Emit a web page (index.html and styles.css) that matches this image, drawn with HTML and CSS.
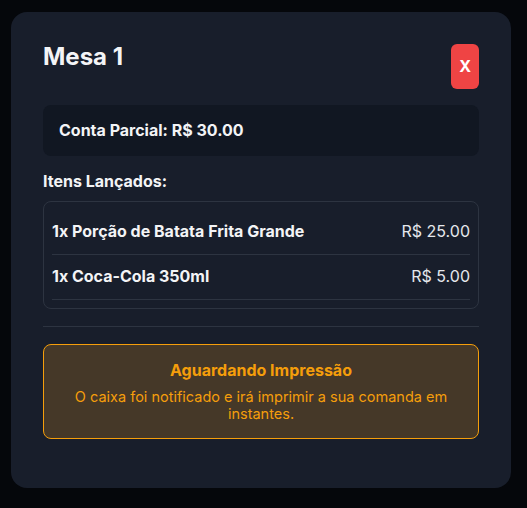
FILE: index.html
```html
<!DOCTYPE html>
<html lang="pt-BR">
<head>
    <meta charset="UTF-8">
    <meta name="viewport" content="width=device-width, initial-scale=1.0">
    <title>Mesa 1</title>
    <link rel="stylesheet" href="styles.css">
</head>
<body>

    <div class="overlay">
        <div class="modal">
            <div class="modal-header">
                <h2>Mesa 1</h2>
                <button class="close">X</button>
            </div>

            <div class="partial">
                <strong>Conta Parcial: R$ 30.00</strong>
            </div>

            <h3>Itens Lançados:</h3>
            <ul class="items">
                <li>
                    <span class="item-name">1x Porção de Batata Frita Grande</span>
                    <span class="item-price">R$ 25.00</span>
                </li>
                <li>
                    <span class="item-name">1x Coca-Cola 350ml</span>
                    <span class="item-price">R$ 5.00</span>
                </li>
            </ul>

            <hr class="divider">

            <!-- Print status -->
            <div class="status">
                <h4>Aguardando Impressão</h4>
                <p>O caixa foi notificado e irá imprimir a sua comanda em instantes.</p>
            </div>
        </div>
    </div>

</body>
</html>
```

FILE: styles.css
```css
* {
    box-sizing: border-box;
}
body {
    margin: 0;
    font-family: Inter, "Noto Sans", Arial, sans-serif;
    background-color: #05070b;
    color: #f3f4f6;
}
.overlay {
    padding: 12px 16px 21px 11px;
}
.modal {
    width: 500px;
    background-color: #181e2b;
    border-radius: 16px;
    padding: 32px 32px 49px 32px;
}
.modal-header {
    display: flex;
    justify-content: space-between;
    align-items: flex-start;
    margin-bottom: 16px;
}
h2 {
    margin: 0;
    font-size: 24px;
    line-height: 26px;
    font-weight: 700;
}
.close {
    background-color: #ef4444;
    color: #fff;
    border: none;
    border-radius: 6px;
    padding: 13px 8px;
    font-family: inherit;
    font-size: 16px;
    line-height: 19px;
    font-weight: 700;
    cursor: pointer;
}
.partial {
    background-color: #111722;
    border-radius: 8px;
    padding: 16px;
    font-size: 16px;
    line-height: 19px;
    margin-bottom: 16px;
}
h3 {
    margin: 0 0 10px 0;
    font-size: 16px;
    line-height: 19px;
    font-weight: 700;
}
.items {
    list-style-type: none;
    margin: 0;
    padding: 8px;
    border: 1px solid #2d3441;
    border-radius: 8px;
}
.items li {
    display: flex;
    justify-content: space-between;
    padding: 12px 0 13px 0;
    border-bottom: 1px solid #2d3441;
    font-size: 16px;
    line-height: 19px;
}
.item-name {
    font-weight: 700;
}
.item-price {
    color: #e5e7eb;
}
.divider {
    border: none;
    border-top: 1px solid #2d3441;
    margin: 17px 0;
}
.status {
    background-color: #453828;
    border: 1px solid #f59e0b;
    border-radius: 8px;
    padding: 16px;
    text-align: center;
    color: #f59e0b;
}
.status h4 {
    margin: 0 0 8px 0;
    font-size: 16px;
    line-height: 19px;
    font-weight: 700;
}
.status p {
    margin: 0;
    font-size: 14.5px;
    line-height: 17px;
}
```
